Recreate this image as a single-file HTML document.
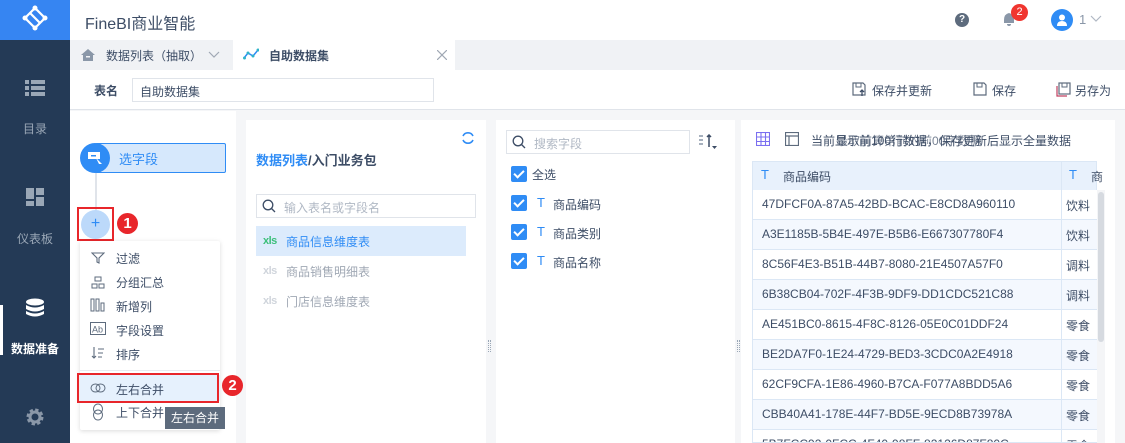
<!DOCTYPE html>
<html><head><meta charset="utf-8"><style>
*{box-sizing:border-box;margin:0;padding:0}
html,body{width:1125px;height:443px;overflow:hidden}
body{background:#f5f6f8;font-family:"Liberation Sans","Noto Sans CJK SC",sans-serif;font-size:12px;color:#3d4d66}
#w{position:relative;width:1125px;height:443px;overflow:hidden}
.a{position:absolute}
.side{left:0;top:0;width:70px;height:443px;background:#243a56}
.logo{left:0;top:0;width:70px;height:40px;background:#3685f2}
.sl{color:#9aa7b6;font-size:12px;width:70px;text-align:center}
.row{left:752px;width:345px;height:30px;border-bottom:1px solid #dbe7f5;background:#fff}
.row.alt{background:#f4f8fe}
.row span{position:absolute;left:10px;top:7px;font-size:12px;color:#3d4d66}
.row b{position:absolute;left:309px;top:0;width:1px;height:30px;background:#dbe7f5}
.row i{position:absolute;left:314px;top:7px;font-style:normal}
.cb{width:16px;height:16px;background:#2f8cf5;border-radius:2px}
.cb:after{content:"";position:absolute;left:5px;top:2px;width:4px;height:8px;border:solid #fff;border-width:0 2px 2px 0;transform:rotate(45deg)}
.mi{font-size:12px;color:#3d4d66}
.x{font-size:11px;font-weight:bold;letter-spacing:-0.5px}
</style></head><body><div id="w">
<div class="a side"></div>
<div class="a logo"><svg width="70" height="40"><g fill="none" stroke="#fff" stroke-width="2.2"><path d="M35 8 L25 18 L35 28 M35 8 L45 18 L35 28"/><path d="M30 13 L40 23"/></g><g fill="#fff"><circle cx="35" cy="8" r="2.5"/><circle cx="25" cy="18" r="2.5"/><circle cx="45" cy="18" r="2.5"/><circle cx="35" cy="28" r="2.5"/></g></svg></div>
<svg class="a" style="left:25px;top:80px" width="20" height="16"><g fill="#9aa7b6"><rect x="0" y="0" width="4" height="4"/><rect x="6" y="0" width="14" height="4"/><rect x="0" y="6" width="4" height="4"/><rect x="6" y="6" width="14" height="4"/><rect x="0" y="12" width="4" height="4"/><rect x="6" y="12" width="14" height="4"/></g></svg>
<div class="a sl" style="top:120px">目录</div>
<svg class="a" style="left:26px;top:188px" width="18" height="18"><g fill="#9aa7b6"><rect x="0" y="0" width="8" height="11"/><rect x="10" y="0" width="8" height="7"/><rect x="0" y="13" width="8" height="5"/><rect x="10" y="9" width="8" height="9"/></g></svg>
<div class="a sl" style="top:230px">仪表板</div>
<div class="a" style="left:0;top:305px;width:3px;height:50px;background:#fff"></div>
<svg class="a" style="left:25px;top:298px" width="20" height="20"><g fill="#fff"><ellipse cx="10" cy="4" rx="9" ry="3.5"/><path d="M1 7 Q10 12 19 7 V11 Q10 16 1 11Z"/><path d="M1 13 Q10 18 19 13 V16 Q10 21 1 16Z"/></g></svg>
<div class="a sl" style="top:340px;color:#fff;font-weight:bold">数据准备</div>
<svg class="a" style="left:25px;top:407px" width="20" height="20"><circle cx="10" cy="10" r="6.5" fill="none" stroke="#8a97a8" stroke-width="4" stroke-dasharray="3 2.1"/><circle cx="10" cy="10" r="5" fill="none" stroke="#8a97a8" stroke-width="3"/></svg>
<div class="a" style="left:70px;top:0;width:1055px;height:40px;background:#fff"></div>
<div class="a" style="left:85px;top:10px;font-size:16px;color:#3d4d66">FineBI商业智能</div>
<div class="a" style="left:955px;top:13px;width:14px;height:14px;border-radius:50%;background:#5d6b7d;color:#fff;font-size:10px;font-weight:bold;text-align:center;line-height:14px">?</div>
<svg class="a" style="left:1002px;top:12px" width="14" height="15"><path d="M7 1 Q2 2 2 8 V11 H12 V8 Q12 2 7 1Z M5 12 H9 Q9 14 7 14 Q5 14 5 12Z" fill="#8a97a8"/></svg>
<div class="a" style="left:1011px;top:4px;width:17px;height:17px;border-radius:50%;background:#f0352f;color:#fff;font-size:11px;text-align:center;line-height:17px">2</div>
<div class="a" style="left:1051px;top:9px;width:22px;height:22px;border-radius:50%;background:#2f8cf5"></div>
<svg class="a" style="left:1055px;top:13px" width="14" height="14"><circle cx="7" cy="4.5" r="3" fill="#fff"/><path d="M2 13 Q2 8 7 8 Q12 8 12 13Z" fill="#fff"/></svg>
<div class="a" style="left:1079px;top:12px;color:#8a97a8;font-size:13px">1</div>
<svg class="a" style="left:1090px;top:15px" width="12" height="8"><path d="M1 1 L6 6 L11 1" fill="none" stroke="#b0b8c4" stroke-width="1.2"/></svg>
<div class="a" style="left:70px;top:40px;width:1055px;height:30px;background:#f0f2f5"></div>
<svg class="a" style="left:81px;top:49px" width="14" height="12"><path d="M7 0 L14 6 H12 V12 H2 V6 H0Z" fill="#8a97a8"/><rect x="5" y="7" width="4" height="1.5" fill="#f0f2f5"/></svg>
<div class="a" style="left:106px;top:47px;color:#3d4d66">数据列表（抽取）</div>
<svg class="a" style="left:208px;top:51px" width="12" height="8"><path d="M1 1 L6 6 L11 1" fill="none" stroke="#a0a8b4" stroke-width="1.2"/></svg>
<div class="a" style="left:233px;top:40px;width:222px;height:30px;background:#fff"></div>
<svg class="a" style="left:243px;top:48px" width="16" height="12"><path d="M1 10 L5 5 L10 8 L15 2" fill="none" stroke="#2f8cf5" stroke-width="1.5"/><g fill="#2fb3c9"><circle cx="1.5" cy="10" r="1.5"/><circle cx="5" cy="5" r="1.5"/><circle cx="10" cy="8" r="1.5"/><circle cx="15" cy="2" r="1.5"/></g></svg>
<div class="a" style="left:269px;top:47px;font-weight:bold;color:#3d4d66">自助数据集</div>
<svg class="a" style="left:437px;top:50px" width="10" height="10"><path d="M0 0 L10 10 M10 0 L0 10" stroke="#a0a8b4" stroke-width="1.2"/></svg>
<div class="a" style="left:70px;top:70px;width:1055px;height:40px;background:#fff;border-bottom:1px solid #e0e4ea"></div>
<div class="a" style="left:94px;top:82px;font-weight:bold">表名</div>
<div class="a" style="left:132px;top:78px;width:302px;height:24px;border:1px solid #e0e4ea;padding:4px 7px">自助数据集</div>
<svg class="a" style="left:852px;top:82px" width="14" height="15"><path d="M1 1 H11 L13 3 V13 H1Z" fill="none" stroke="#5d6b7d" stroke-width="1.2"/><rect x="4" y="1" width="5" height="4" fill="none" stroke="#5d6b7d"/><path d="M10 14 V8 M8 10 L10 8 L12 10" stroke="#3d4d66" stroke-width="1.3" fill="none"/></svg>
<div class="a" style="left:872px;top:82px">保存并更新</div>
<svg class="a" style="left:973px;top:82px" width="14" height="14"><path d="M1 1 H11 L13 3 V13 H1Z" fill="none" stroke="#5d6b7d" stroke-width="1.2"/><rect x="4" y="1" width="5" height="4" fill="none" stroke="#5d6b7d"/></svg>
<div class="a" style="left:992px;top:82px">保存</div>
<svg class="a" style="left:1056px;top:82px" width="15" height="15"><rect x="3" y="1" width="11" height="11" fill="none" stroke="#5d6b7d" stroke-width="1.2"/><path d="M1 4 V14 H11" fill="none" stroke="#c04060" stroke-width="1.2"/><rect x="6" y="1" width="5" height="4" fill="none" stroke="#5d6b7d"/></svg>
<div class="a" style="left:1075px;top:82px">另存为</div>
<div class="a" style="left:70px;top:111px;width:166px;height:332px;background:#fff"></div>
<div class="a" style="left:95px;top:165px;width:2px;height:50px;background:#e0e4ea"></div>
<div class="a" style="left:95px;top:143px;width:131px;height:30px;background:#d6e8fc;border:1px solid #2f8cf5;border-radius:2px"></div>
<div class="a" style="left:80px;top:143px;width:30px;height:30px;border-radius:50%;background:#2f8cf5"></div>
<svg class="a" style="left:87px;top:151px" width="16" height="14"><rect x="1" y="1" width="12" height="7" fill="#fff"/><rect x="4" y="4" width="5" height="1.5" fill="#2f8cf5"/><path d="M9 7 L15 13 L12 13 Z" fill="#fff"/></svg>
<div class="a" style="left:119px;top:149px;color:#2f8cf5;font-size:13px">选字段</div>
<div class="a" style="left:77px;top:207px;width:37px;height:34px;border:2px solid #e8262b"></div>
<div class="a" style="left:81px;top:210px;width:29px;height:29px;border-radius:50%;background:#bcd9fa;color:#2f8cf5;text-align:center;line-height:28px;font-size:16px">+</div>
<div class="a" style="left:117px;top:213px;width:21px;height:21px;border-radius:50%;background:#e8262b;color:#fff;font-size:15px;font-weight:bold;text-align:center;line-height:21px">1</div>
<div class="a" style="left:80px;top:241px;width:140px;height:189px;background:#fff;box-shadow:0 1px 5px rgba(0,0,0,.15);border-radius:2px"></div>
<svg class="a" style="left:91px;top:252px" width="14" height="12"><path d="M1 1 H13 L8 6 V11 L6 10 V6Z" fill="none" stroke="#5d6b7d" stroke-width="1.1"/></svg>
<div class="a mi" style="left:116px;top:250px">过滤</div>
<svg class="a" style="left:91px;top:276px" width="14" height="13"><rect x="4" y="1" width="6" height="4" fill="none" stroke="#5d6b7d"/><rect x="1" y="8" width="5" height="4" fill="none" stroke="#5d6b7d"/><rect x="8" y="8" width="5" height="4" fill="none" stroke="#5d6b7d"/></svg>
<div class="a mi" style="left:116px;top:274px">分组汇总</div>
<svg class="a" style="left:90px;top:298px" width="16" height="14"><g fill="none" stroke="#5d6b7d"><rect x="1" y="1" width="3" height="12"/><rect x="6" y="1" width="3" height="12"/><rect x="11" y="5" width="3" height="8"/></g></svg>
<div class="a mi" style="left:116px;top:298px">新增列</div>
<svg class="a" style="left:90px;top:322px" width="16" height="14"><rect x="0.5" y="0.5" width="15" height="12" fill="none" stroke="#5d6b7d"/><text x="2" y="10.5" font-size="9" fill="#5d6b7d" font-family="Liberation Sans">Ab</text></svg>
<div class="a mi" style="left:116px;top:322px">字段设置</div>
<svg class="a" style="left:91px;top:346px" width="14" height="14"><path d="M3 1 V12 M1 10 L3 12 L5 10 M7 3 H13 M7 7 H12 M7 11 H11" fill="none" stroke="#5d6b7d" stroke-width="1.1"/></svg>
<div class="a mi" style="left:116px;top:346px">排序</div>
<div class="a" style="left:80px;top:370px;width:140px;height:1px;background:#e8ebf0"></div>
<div class="a" style="left:80px;top:375px;width:140px;height:26px;background:#e6f1fd"></div>
<div class="a" style="left:77px;top:373px;width:142px;height:30px;border:2px solid #e8262b"></div>
<svg class="a" style="left:90px;top:382px" width="16" height="12"><ellipse cx="5.5" cy="6" rx="4.5" ry="4" fill="none" stroke="#5d6b7d"/><ellipse cx="10.5" cy="6" rx="4.5" ry="4" fill="none" stroke="#5d6b7d"/></svg>
<div class="a mi" style="left:116px;top:381px">左右合并</div>
<div class="a" style="left:222px;top:375px;width:21px;height:21px;border-radius:50%;background:#e8262b;color:#fff;font-size:15px;font-weight:bold;text-align:center;line-height:21px">2</div>
<svg class="a" style="left:92px;top:403px" width="12" height="18"><ellipse cx="6" cy="6" rx="4.5" ry="5" fill="none" stroke="#5d6b7d"/><ellipse cx="6" cy="12" rx="4.5" ry="5" fill="none" stroke="#5d6b7d"/></svg>
<div class="a mi" style="left:116px;top:404px">上下合并</div>
<div class="a" style="left:165px;top:407px;width:60px;height:22px;background:#5d6b7d;color:#fff;text-align:center;line-height:22px;font-size:12px">左右合并</div>
<div class="a" style="left:246px;top:120px;width:240px;height:323px;background:#fff"></div>
<svg class="a" style="left:461px;top:131px" width="14" height="14"><path d="M12 5 A5.5 5.5 0 0 0 2 5 M2 9 A5.5 5.5 0 0 0 12 9" fill="none" stroke="#2f8cf5" stroke-width="1.6"/></svg>
<div class="a" style="left:256px;top:150px;font-size:13px;font-weight:bold"><span style="color:#2f8cf5">数据列表</span>/入门业务包</div>
<div class="a" style="left:256px;top:194px;width:220px;height:24px;border:1px solid #e0e4ea"></div>
<svg class="a" style="left:262px;top:199px" width="14" height="14"><circle cx="6" cy="6" r="4.8" fill="none" stroke="#3d4d66" stroke-width="1.3"/><path d="M9.5 9.5 L13 13" stroke="#3d4d66" stroke-width="1.3"/></svg>
<div class="a" style="left:284px;top:199px;color:#b0b8c4">输入表名或字段名</div>
<div class="a" style="left:256px;top:226px;width:210px;height:30px;background:#dcebfc"></div>
<div class="a x" style="left:263px;top:235px;color:#3cbf7a">xls</div>
<div class="a" style="left:286px;top:233px;color:#2f8cf5">商品信息维度表</div>
<div class="a x" style="left:263px;top:265px;color:#d0d5dc">xls</div>
<div class="a" style="left:286px;top:263px;color:#a0a8b4">商品销售明细表</div>
<div class="a x" style="left:263px;top:295px;color:#d0d5dc">xls</div>
<div class="a" style="left:286px;top:293px;color:#a0a8b4">门店信息维度表</div>
<div class="a" style="left:488px;top:340px;width:3px;height:12px;border-left:1px dotted #9aa7b6;border-right:1px dotted #9aa7b6"></div>
<div class="a" style="left:496px;top:120px;width:239px;height:323px;background:#fff"></div>
<div class="a" style="left:506px;top:130px;width:184px;height:24px;border:1px solid #e0e4ea"></div>
<svg class="a" style="left:512px;top:135px" width="14" height="14"><circle cx="6" cy="6" r="4.8" fill="none" stroke="#3d4d66" stroke-width="1.3"/><path d="M9.5 9.5 L13 13" stroke="#3d4d66" stroke-width="1.3"/></svg>
<div class="a" style="left:534px;top:135px;color:#b0b8c4">搜索字段</div>
<svg class="a" style="left:698px;top:134px" width="20" height="18"><path d="M1 2 H5 M1 6 H5 M1 10 H5" stroke="#8a97a8" stroke-width="1.5"/><path d="M11 1 V13 M9 3 L11 1 L13 3" stroke="#3d4d66" stroke-width="1.5" fill="none"/><path d="M14 12 H19 L16.5 15Z" fill="#3d4d66"/></svg>
<div class="a cb" style="left:511px;top:166px"></div><div class="a" style="left:532px;top:166px">全选</div>
<div class="a cb" style="left:511px;top:195px"></div><div class="a" style="left:537px;top:195px;color:#2f8cf5;font-size:13px">T</div><div class="a" style="left:553px;top:196px">商品编码</div>
<div class="a cb" style="left:511px;top:224px"></div><div class="a" style="left:537px;top:224px;color:#2f8cf5;font-size:13px">T</div><div class="a" style="left:553px;top:225px">商品类别</div>
<div class="a cb" style="left:511px;top:253px"></div><div class="a" style="left:537px;top:253px;color:#2f8cf5;font-size:13px">T</div><div class="a" style="left:553px;top:254px">商品名称</div>
<div class="a" style="left:737px;top:340px;width:3px;height:12px;border-left:1px dotted #9aa7b6;border-right:1px dotted #9aa7b6"></div>
<div class="a" style="left:741px;top:120px;width:374px;height:323px;background:#fff"></div>
<svg class="a" style="left:756px;top:132px" width="14" height="14"><g fill="none" stroke="#7b6ff0" stroke-width="1.1"><rect x="0.5" y="0.5" width="13" height="13"/><path d="M0.5 5 H13.5 M0.5 9.5 H13.5 M5 0.5 V13.5 M9.5 0.5 V13.5"/></g></svg>
<svg class="a" style="left:785px;top:132px" width="14" height="14"><g fill="none" stroke="#5d6b7d" stroke-width="1.2"><rect x="0.5" y="0.5" width="13" height="13"/><path d="M0.5 4 H13.5 M4 4 V13.5"/></g></svg>
<div class="a" style="left:811px;top:132px;white-space:nowrap">当前显示前100行数据，保存更新后显示全量数据</div>
<div class="a" style="left:836px;top:132px;white-space:nowrap;opacity:.7">最取前算第前的前00字数据</div>
<div class="a" style="left:752px;top:161px;width:345px;height:30px;background:#e8f1fc;border:1px solid #dbe7f5"></div>
<div class="a" style="left:761px;top:167px;color:#2f8cf5;font-size:13px">T</div>
<div class="a" style="left:783px;top:168px">商品编码</div>
<div class="a" style="left:1061px;top:161px;width:1px;height:30px;background:#dbe7f5"></div>
<div class="a" style="left:1069px;top:167px;color:#2f8cf5;font-size:13px">T</div>
<div class="a" style="left:1091px;top:168px">商</div>
<div class="a row" style="top:190px"><span>47DFCF0A-87A5-42BD-BCAC-E8CD8A960110</span><b></b><i>饮料</i></div>
<div class="a row alt" style="top:220px"><span>A3E1185B-5B4E-497E-B5B6-E667307780F4</span><b></b><i>饮料</i></div>
<div class="a row" style="top:250px"><span>8C56F4E3-B51B-44B7-8080-21E4507A57F0</span><b></b><i>调料</i></div>
<div class="a row alt" style="top:280px"><span>6B38CB04-702F-4F3B-9DF9-DD1CDC521C88</span><b></b><i>调料</i></div>
<div class="a row" style="top:310px"><span>AE451BC0-8615-4F8C-8126-05E0C01DDF24</span><b></b><i>零食</i></div>
<div class="a row alt" style="top:340px"><span>BE2DA7F0-1E24-4729-BED3-3CDC0A2E4918</span><b></b><i>零食</i></div>
<div class="a row" style="top:370px"><span>62CF9CFA-1E86-4960-B7CA-F077A8BDD5A6</span><b></b><i>零食</i></div>
<div class="a row alt" style="top:400px"><span>CBB40A41-178E-44F7-BD5E-9ECD8B73978A</span><b></b><i>零食</i></div>
<div class="a row" style="top:430px;height:13px;overflow:hidden"><span>5B7FCC92-0FCC-4F40-98FF-82126D87F80C</span><b></b><i>零食</i></div>
<div class="a" style="left:752px;top:161px;width:1px;height:282px;background:#dbe7f5"></div>
<div class="a" style="left:1097px;top:190px;width:8px;height:253px;background:#f4f5f7"></div>
<div class="a" style="left:1098px;top:192px;width:6px;height:150px;background:#d6dae0;border-radius:3px"></div>
</div></body></html>
